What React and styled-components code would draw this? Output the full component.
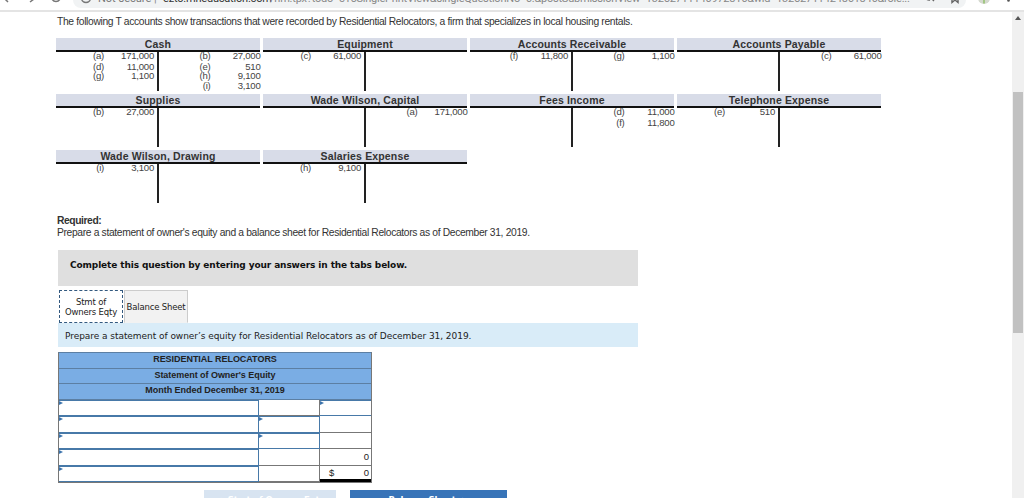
import React from 'react'
import styled, { createGlobalStyle } from 'styled-components'

const GlobalStyle = createGlobalStyle`
  * {
    box-sizing: border-box;
  }
  body {
    margin: 0;
    overflow: hidden;
    background: #fff;
    font-family: 'Liberation Sans', Arial, sans-serif;
    color: #333;
  }
`

const accounts = [
  {
    title: 'Cash',
    debits: [['(a)', '171,000'], ['(d)', '11,000'], ['(g)', '1,100']],
    credits: [['(b)', '27,000'], ['(e)', '510'], ['(h)', '9,100'], ['(i)', '3,100']]
  },
  { title: 'Equipment', debits: [['(c)', '61,000']] },
  {
    title: 'Accounts Receivable',
    debits: [['(f)', '11,800']],
    credits: [['(g)', '1,100']]
  },
  { title: 'Accounts Payable', credits: [['(c)', '61,000']] },
  { title: 'Supplies', debits: [['(b)', '27,000']] },
  { title: 'Wade Wilson, Capital', credits: [['(a)', '171,000']] },
  { title: 'Fees Income', credits: [['(d)', '11,000'], ['(f)', '11,800']] },
  { title: 'Telephone Expense', debits: [['(e)', '510']] },
  { title: 'Wade Wilson, Drawing', debits: [['(i)', '3,100']] },
  { title: 'Salaries Expense', debits: [['(h)', '9,100']] }
]

// which cells take input, and what the computed ones show
const rows = [
  { total: { input: true } },
  { amount: { input: true } },
  { amount: { input: true } },
  { total: { value: '0' } },
  { total: { sign: '$', value: '0', last: true } }
]

function Entries({ items = [], credit }) {
  return (
    <Side $credit={credit}>
      {items.map(([ref, amount]) => (
        <Entry key={ref}>
          <span>{ref}</span>
          <span>{amount}</span>
        </Entry>
      ))}
    </Side>
  )
}

function TAccount({ title, debits, credits }) {
  return (
    <Account>
      <AccountTitle>{title}</AccountTitle>
      <AccountBody>
        <Entries items={debits} />
        <Entries items={credits} credit />
      </AccountBody>
    </Account>
  )
}

function Cell({ input, sign, value, last }) {
  return (
    <SheetCell $input={input} $last={last}>
      {input && <Marker viewBox='0 0 4 4'><path d='M0 0L4 2L0 4Z' /></Marker>}
      <span>{sign}</span>
      <span>{value}</span>
    </SheetCell>
  )
}

export default function App() {
  return (
    <Window>
      <GlobalStyle />
      <Toolbar>
        <NavIcons viewBox='0 0 70 10'>
          <path d='M8 2L5 -1M30 2L34 -1' />
          <path d='M52 -1a4.500 4.500 0 0 0 8 0' />
        </NavIcons>
        <Omnibox>
          <InfoIcon viewBox='0 0 12 10'>
            <path d='M1.500 -2a4.500 4.500 0 0 0 9 0M6 -4v3.500' />
          </InfoIcon>
          <Address>
            <Secure>Not secure</Secure>
            <Bar>|</Bar>
            <Host>ezto.mheducation.com</Host>
            <Path>
              /hm.tpx?todo=c15SinglePrintView&amp;singleQuestionNo=6.&amp;postSubmissionView=13252711140972816&amp;wid=13252711424861846&amp;role...
            </Path>
          </Address>
          <BoxIcons viewBox='0 0 40 10'>
            <path d='M13 -3a4 4 0 1 0 -3 3M11 -2l3 3' />
            <path d='M32 2.500v-6h6v6l-3-2.500z' />
          </BoxIcons>
        </Omnibox>
        <ProfileIcons viewBox='0 0 58 10'>
          <circle cx='18' cy='-2' r='6' fill='#d5d9cf' />
          <path d='M18 -3v6.500' stroke='#8fbf6a' strokeWidth='1.500' />
          <circle cx='42.500' cy='0.500' r='1.300' fill='#555' />
        </ProfileIcons>
      </Toolbar>
      <Viewport>
        <Page>
          <Intro>
            The following T accounts show transactions that were recorded by Residential Relocators, a firm that specializes in local housing rentals.
          </Intro>
          <Accounts>
            {accounts.map(account => (
              <TAccount key={account.title} {...account} />
            ))}
          </Accounts>
          <Required>Required:</Required>
          <Task>
            Prepare a statement of owner's equity and a balance sheet for Residential Relocators as of December 31, 2019.
          </Task>
          <Question>
            <Banner>Complete this question by entering your answers in the tabs below.</Banner>
            <Tabs>
              <Tab $active>Stmt of<br />Owners Eqty</Tab>
              <Tab>Balance Sheet</Tab>
            </Tabs>
            <Prompt>
              Prepare a statement of owner’s equity for Residential Relocators as of December 31, 2019.
            </Prompt>
            <Sheet>
              <SheetHead>RESIDENTIAL RELOCATORS</SheetHead>
              <SheetHead>Statement of Owner's Equity</SheetHead>
              <SheetHead>Month Ended December 31, 2019</SheetHead>
              {rows.map((row, i) => (
                <SheetRow key={i}>
                  <Cell input />
                  <Cell {...row.amount} />
                  <Cell {...row.total} />
                </SheetRow>
              ))}
            </Sheet>
            <Pager>
              <PageButton $width='132px' $disabled>&lt;&nbsp; Stmt of Owners Eqty</PageButton>
              <PageButton $width='157px'>Balance Sheet &nbsp;&gt;</PageButton>
            </Pager>
          </Question>
        </Page>
        <Scrollbar>
          <Arrow viewBox='0 0 6 4'><path d='M0 4L3 0L6 4Z' /></Arrow>
          <Thumb />
        </Scrollbar>
      </Viewport>
    </Window>
  )
}

const Window = styled.div`
  display: flex;
  flex-direction: column;
  width: 1024px;
  height: 498px;
  overflow: hidden;
`

const Toolbar = styled.header`
  display: flex;
  flex: none;
  height: 12px;
  background: #fff;
  border-bottom: 2px solid #e4e4e4;
  overflow: hidden;
`

const NavIcons = styled.svg`
  width: 70px;
  height: 10px;
  margin-right: 3px;
  fill: none;
  stroke: #777;
  stroke-width: 1.5;
`

const Omnibox = styled.div`
  display: flex;
  width: 893px;
  height: 8px;
  padding-left: 7px;
  background: #f1f3f4;
  border-radius: 0 0 14px 14px;
`

const InfoIcon = styled.svg`
  flex: none;
  width: 12px;
  height: 10px;
  margin-right: 6px;
  fill: none;
  stroke: #777;
  stroke-width: 1.4;
`

const Address = styled.div`
  display: flex;
  flex: none;
  width: 822px;
  height: 14px;
  margin-top: -8px;
  font: 11px/14px Roboto, sans-serif;
  white-space: nowrap;
  span {
    flex: none;
  }
`

const Secure = styled.span`
  width: 56px;
  color: #777;
`

const Bar = styled.span`
  width: 9px;
  color: #888;
`

const Host = styled.span`
  width: 107px;
  letter-spacing: -0.2px;
  color: #333;
`

const Path = styled.span`
  color: #888;
  letter-spacing: -0.22px;
`

const BoxIcons = styled.svg`
  flex: none;
  width: 40px;
  height: 10px;
  fill: none;
  stroke: #666;
  stroke-width: 1.4;
`

const ProfileIcons = styled.svg`
  width: 58px;
  height: 10px;
`

const Viewport = styled.div`
  display: flex;
  flex: 1;
  min-height: 0;
`

const Page = styled.main`
  flex: 1;
  padding: 4px 0 0 56px;
  overflow: hidden;
`

const Intro = styled.p`
  height: 22px;
  margin: 0;
  padding-left: 1px;
  font-size: 10.3px;
  line-height: 12px;
  letter-spacing: -0.34px;
  white-space: nowrap;
`

const Accounts = styled.section`
  display: grid;
  grid-template-columns: repeat(4, 204px);
  grid-auto-rows: 53px;
  gap: 3px;
`

const Account = styled.div`
  display: flex;
  flex-direction: column;
`

const AccountTitle = styled.h3`
  height: 14px;
  margin: 0;
  background: #d8dce8;
  border-bottom: 2px solid #111;
  font-size: 10.5px;
  line-height: 12px;
  letter-spacing: 0.15px;
  text-align: center;
`

const AccountBody = styled.div`
  display: flex;
  height: 39px;
`

const Side = styled.div`
  flex: none;
  width: ${props => (props.$credit ? '101.5px' : '103px')};
  padding-right: ${props => (props.$credit ? '0' : '3px')};
  border-right: ${props => (props.$credit ? 'none' : '2px solid #222')};
  font-size: 9.6px;
  line-height: 8px;
  letter-spacing: -0.25px;
`

const Entry = styled.div`
  display: flex;
  justify-content: flex-end;
  height: 10px;
  color: #444;
  &:nth-child(2) {
    padding-top: 1px;
  }
  span:last-child {
    width: 50px;
    text-align: right;
  }
`

const Required = styled.h4`
  height: 12px;
  margin: 12px 0 0 1px;
  font-size: 10.3px;
  line-height: 11px;
  letter-spacing: -0.42px;
`

const Task = styled.p`
  height: 11px;
  margin: 0 0 0 1px;
  font-size: 10.3px;
  line-height: 11px;
  letter-spacing: -0.35px;
  white-space: nowrap;
`

const Question = styled.section`
  width: 580px;
  margin: 12px 0 0 2px;
  font-family: 'DejaVu Sans', Verdana, sans-serif;
  font-size: 9px;
  color: #222;
`

const Banner = styled.div`
  height: 36px;
  padding: 9px 12px;
  background: #dfdfdf;
  color: #111;
  font-weight: bold;
  line-height: 12px;
  letter-spacing: -0.12px;
  white-space: nowrap;
`

const Tabs = styled.div`
  display: flex;
  gap: 1px;
  height: 37px;
  padding: 4px 0 0 1px;
`

const Tab = styled.div`
  display: flex;
  align-items: center;
  justify-content: center;
  width: 64px;
  border: ${props => (props.$active ? '1px dashed #33597f' : '1px solid #ccc')};
  border-bottom-color: ${props => (props.$active ? '#33597f' : '#f2f2f2')};
  background: ${props => (props.$active ? '#fff' : '#f2f2f2')};
  font-size: 8.5px;
  line-height: 10px;
  letter-spacing: -0.17px;
  text-align: center;
  white-space: nowrap;
`

const Prompt = styled.div`
  height: 24px;
  padding: 0 7px;
  background: #d9ecf8;
  line-height: 26px;
  letter-spacing: -0.05px;
  white-space: nowrap;
`

const Sheet = styled.div`
  width: 314px;
  height: 131px;
  margin-top: 5px;
  border: 1px solid #777;
  border-top-color: #5c7fa3;
  font: 9px 'Liberation Sans', Arial, sans-serif;
`

const SheetHead = styled.div`
  height: 15.7px;
  background: #7aade4;
  border-bottom: 1px solid #5c7fa3;
  font-weight: bold;
  line-height: 13px;
  letter-spacing: -0.04px;
  text-align: center;
`

const SheetRow = styled.div`
  display: grid;
  grid-template-columns: 200px 61px 51px;
  height: 16.4px;
`

const SheetCell = styled.div`
  position: relative;
  display: flex;
  justify-content: space-between;
  align-items: center;
  padding: 0 2px 0 9px;
  border: solid ${props => (props.$input ? '#4779a8' : '#777')};
  border-width: ${props => (props.$input ? '1px 1px 1px 0' : '0 1px 1px 0')};
  font-size: 9.5px;
  &:last-child {
    border-right-width: 0;
  }
  ${props => props.$last && 'border-bottom: 3px solid #000;'}
`

const Marker = styled.svg`
  position: absolute;
  top: 0;
  left: 0;
  width: 4px;
  height: 4px;
  fill: #3d74ad;
`

const Pager = styled.div`
  display: flex;
  gap: 14px;
  margin: 7px 0 0 146px;
`

const PageButton = styled.div`
  width: ${props => props.$width};
  height: 26px;
  background: ${props => (props.$disabled ? '#d8e4f1' : '#3874b8')};
  color: #fff;
  font-size: 8.5px;
  font-weight: bold;
  line-height: 21px;
  letter-spacing: -0.1px;
  text-align: center;
`

const Scrollbar = styled.div`
  display: flex;
  flex-direction: column;
  align-items: center;
  width: 12px;
  background: #f0f0f0;
`

const Arrow = styled.svg`
  width: 6px;
  height: 4px;
  margin-top: 4px;
  fill: #555;
`

const Thumb = styled.div`
  width: 10px;
  height: 241px;
  margin-top: 72px;
  background: #c1c1c1;
`
